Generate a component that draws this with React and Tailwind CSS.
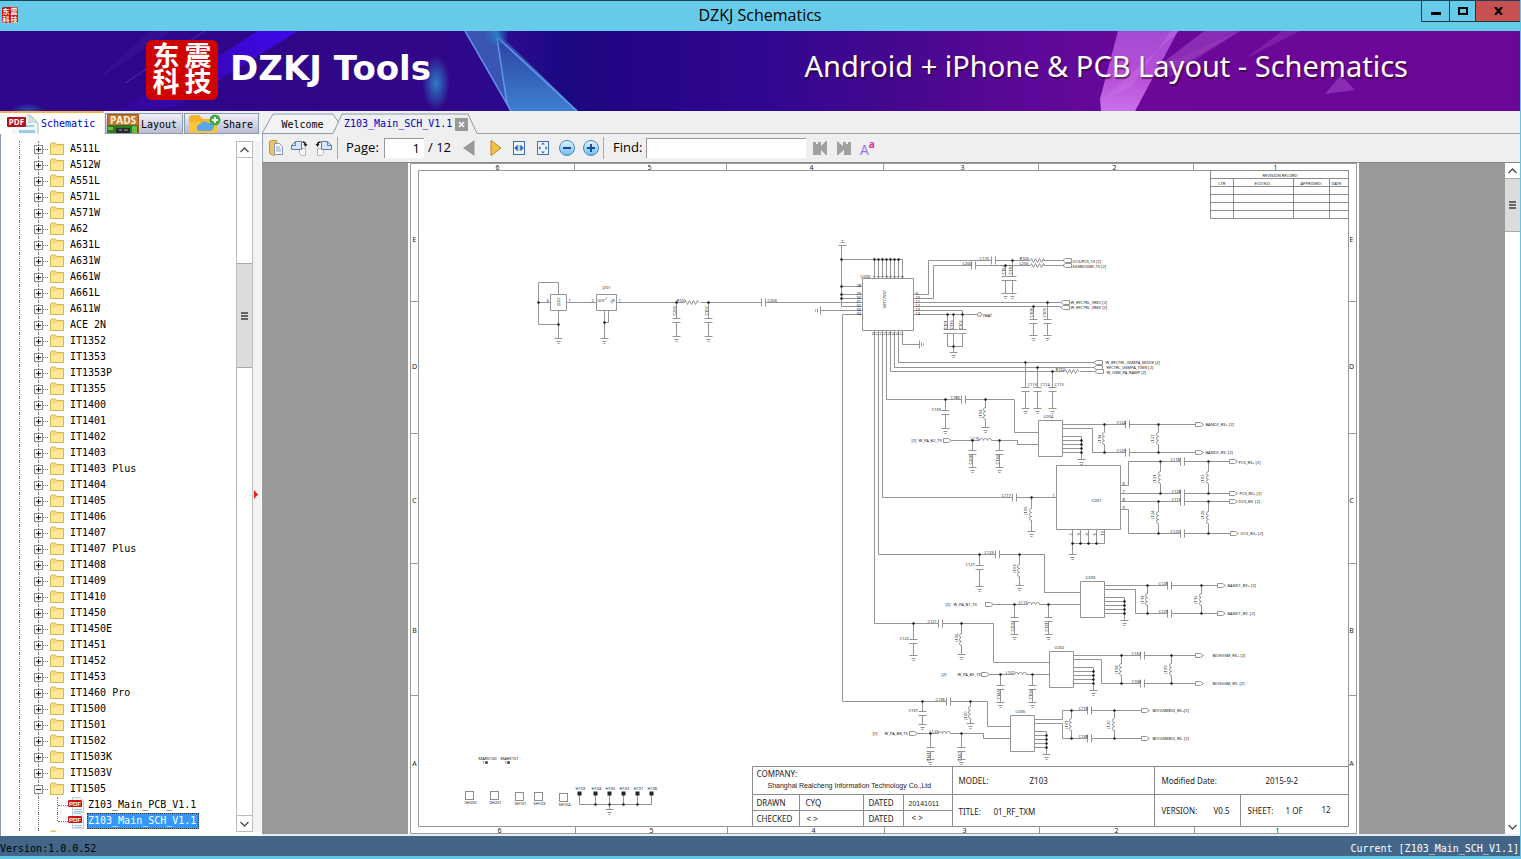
import React from "react";

const MONO = "font-['DejaVu_Sans_Mono',monospace] text-[10px] leading-4";

const FOLDERS = [
  "A511L", "A512W", "A551L", "A571L", "A571W", "A62", "A631L", "A631W", "A661W", "A661L", "A611W",
  "ACE 2N", "IT1352", "IT1353", "IT1353P", "IT1355", "IT1400", "IT1401", "IT1402", "IT1403",
  "IT1403 Plus", "IT1404", "IT1405", "IT1406", "IT1407", "IT1407 Plus", "IT1408", "IT1409",
  "IT1410", "IT1450", "IT1450E", "IT1451", "IT1452", "IT1453", "IT1460 Pro", "IT1500", "IT1501",
  "IT1502", "IT1503K", "IT1503V",
];

const FILES = ["Z103_Main_PCB_V1.1", "Z103_Main_SCH_V1.1"];

/* ---------- icons ---------- */

const FolderIcon = () => (
  <svg width="14" height="14" viewBox="0 0 14 14" className="shrink-0">
    <path d="M.5 12.500V2.500l1-1.500h4l1 1.500h7v10z" fill="#f6dd7c" stroke="#d9b44e" />
    <path d="M1 5.500c4 0 6-1 12-1V12H1z" fill="#fbe99b" />
  </svg>
);

const PdfIcon = () => (
  <svg width="16" height="16" viewBox="0 0 16 16" className="shrink-0">
    <path d="M4.500.500h8l3 3V16h-11z" fill="#f4f8fb" stroke="#b9cdd9" />
    <path d="M6 12.500h8M6 14.500h8" stroke="#9dc7e4" />
    <rect x="0" y="3" width="14" height="7" rx="1" fill="#c4161c" />
    <text x="7" y="9" textAnchor="middle" fontSize="6" fontWeight="700" fill="#fff" fontFamily="Liberation Sans, sans-serif">PDF</text>
  </svg>
);

const PdfTabIcon = () => (
  <svg width="32" height="20" viewBox="0 0 32 20" className="shrink-0">
    <path d="M5 0h17l9 9v11H5z" fill="#f2f7fa" />
    <path d="M22 0l9 9v11" fill="none" stroke="#a9bcc6" />
    <path d="M20 0q4 4 1 9q5-2 10 0z" fill="#d5e2ea" stroke="#a9bcc6" strokeWidth=".5" />
    <path d="M18 11h9v2h-9zM12 16h16v3H12z" fill="#9dcdec" />
    <rect x="0" y="3" width="19" height="10" rx="1" fill="#b8121b" />
    <text x="9.500" y="11" textAnchor="middle" fontSize="8" fontWeight="700" fill="#fff" fontFamily="Open Sans, sans-serif">PDF</text>
  </svg>
);

const PadsIcon = () => (
  <svg width="32" height="19" viewBox="0 0 32 19" className="shrink-0">
    <rect x=".5" y=".5" width="31" height="19" fill="#c9742b" stroke="#9a5a1b" />
    <path d="M1 11h30v8H1z" fill="#2c7a24" />
    <path d="M1 13h5v3H1zM25 12h5v7h-5z" fill="#6dbb3e" />
    <path d="M9 14h14v5H9z" fill="#2a2c2a" />
    <path d="M12 16h3m2 0h4" stroke="#8a9" />
    <text x="16" y="10" textAnchor="middle" fontSize="10" fontWeight="700" fill="#fff6df" fontFamily="Open Sans, sans-serif">PADS</text>
  </svg>
);

const ShareIcon = () => (
  <svg width="32" height="19" viewBox="0 0 32 19" className="shrink-0">
    <path d="M0 19V4q0-3 3-3h7l4 4h11q3 0 3 3v11z" fill="#f5b52a" />
    <path d="M0 8h28v11H0z" fill="#fdc53c" />
    <path d="M9 17a4 4 0 0 1 2-7 5 5 0 0 1 8-1 4 4 0 0 1 3 8z" fill="#5ba7e6" />
    <circle cx="26" cy="6" r="5.500" fill="#45a845" />
    <path d="M26 3v6M23 6h6" stroke="#fff" strokeWidth="2" />
  </svg>
);

const OpenIcon = () => (
  <svg width="16" height="16" viewBox="0 0 16 16">
    <path d="M1.500 1.500l2-1h5v13l-3 2-4-2z" fill="#edc566" stroke="#c6973a" />
    <path d="M6.500 3.500h5l3 3v8h-8z" fill="#f5f9fd" stroke="#7c98ba" />
    <path d="M8 7h4M8 9h5M8 11h5" stroke="#8aa8cc" />
  </svg>
);

const RotateIcon = ({ flip }) => (
  <svg width="17" height="17" viewBox="0 0 17 17">
    <g transform={flip ? "translate(17 0) scale(-1 1)" : undefined}>
      <path d="M8.500 8.500h6v7h-4l-2-2z" fill="#fbfbfb" stroke="#b5b5b5" />
      <path d="M4.500 1.500h6v8h-10v-4z" fill="#d6e8fa" stroke="#5b7fa8" />
      <path d="M.5 5.500h4v-4" fill="none" stroke="#5b7fa8" />
      <path d="M11.500 2q3 0 3 3" fill="none" stroke="#222" strokeWidth="1.500" />
      <path d="M12.500 4h4l-2 3z" fill="#222" />
    </g>
  </svg>
);

const FitIcon = ({ page }) => (
  <svg width="14" height="16" viewBox="0 0 14 16">
    <rect x="1.500" y="1.500" width="11" height="13" fill="#eef5fd" stroke="#3f6fae" />
    {page ? (
      <path d="M7 2.500l2 2H5zM7 13.500l2-2H5zM2.500 8l2-2v4zM11.500 8l-2-2v4z" fill="#2d66b0" />
    ) : (
      <path d="M2.500 8l3-3v6zM11.500 8l-3-3v6zM7 5v6" fill="#2d66b0" stroke="#2d66b0" strokeWidth=".5" />
    )}
  </svg>
);

const ZoomIcon = ({ plus }) => (
  <svg width="18" height="18" viewBox="0 0 18 18">
    <defs>
      <linearGradient id={plus ? "zin" : "zout"} x1="0" y1="0" x2="0" y2="1">
        <stop offset="0" stopColor="#e6f5ff" />
        <stop offset="1" stopColor="#6dbcf3" />
      </linearGradient>
    </defs>
    <circle cx="9" cy="9" r="7.500" fill={plus ? "url(#zin)" : "url(#zout)"} stroke="#4a86bd" />
    <path d={plus ? "M5 9h8M9 5v8" : "M5 9h8"} stroke="#174f8f" strokeWidth="2" />
  </svg>
);

const FindIcon = ({ flip }) => (
  <svg width="16" height="16" viewBox="0 0 16 16">
    {flip ? (
      <path d="M1 1l6 5V2h3v2h2V2h3v13H8v-5l-6 5H1z" fill="#a0a0a0" />
    ) : (
      <path d="M1 2h3v2h2V2h3v4l5-5h1v14h-1L9 10v5H1z" fill="#a0a0a0" />
    )}
  </svg>
);

const Chevron = ({ down }) => (
  <svg width="9" height="6" viewBox="0 0 9 6">
    <path d={down ? "M.5 1l4 4 4-4" : "M.5 5l4-4 4 4"} fill="none" stroke="#555" strokeWidth="1.500" />
  </svg>
);

/* ---------- schematic symbols, each returns path data ---------- */

const capH = (x, y) => `M${x} ${y - 4}v8M${x + 4} ${y - 4}v8`;
const gnd = (x, y) => `M${x - 4} ${y}h8M${x - 2} ${y + 3}h4M${x - 1} ${y + 5}h2`;
const capV = (x, top, plate, bottom) =>
  `M${x} ${top}V${plate}M${x - 4} ${plate}h8M${x - 4} ${plate + 4}h8M${x} ${plate + 4}V${bottom}${gnd(x, bottom)}`;
const coils = (x, y, n) => `M${x} ${y}${"a2 2 0 0 0 0 4".repeat(n)}`;
const indV = (x, top, bottom) => {
  const y = Math.round((top + bottom) / 2) - 6;
  return `M${x} ${top}V${y}${coils(x, y, 3)}V${bottom}`;
};
const indH = (x, y) => `M${x} ${y}${"a2 2 0 0 1 4 0".repeat(3)}`;
const res = (x, y) => `M${x} ${y}l1 -2l2 4l2 -4l2 4l2 -4l2 4l2 -4l1 2`;
const portR = (x, y) => `M${x} ${y - 2}h5l3 2l-3 2h-5z`;
const portL = (x, y) => `M${x} ${y}l3 -2h6v4h-6z`;
const box = (x, y, w, h) => `M${x} ${y}h${w}v${h}h${-w}z`;

const Net = ({ d, dots = [] }) => (
  <>
    <path d={d} fill="none" stroke="#949494" />
    {dots.map(([x, y], i) => (
      <circle key={i} cx={x} cy={y} r="1.200" fill="#111" />
    ))}
  </>
);

const Label = ({ x, y, up, children, size = 4 }) => (
  <text
    x={x}
    y={y}
    fontSize={size}
    fill="#222"
    transform={up ? `rotate(-90 ${x} ${y})` : undefined}
  >
    {children}
  </text>
);

// one filter: IC with two outputs on the right and five grounded pins
const FilterStage = ({ x, y, name, bend, rail, a, b, port, hi, lo, caps, coilsNames, outs, textX }) => {
  const cx = port.cap;
  return (
    <>
      <Net
        d={
          box(x, y, 24, 36) +
          `M${x + 24} ${y + 4}H${bend.x1 || a}` + (bend.x1 ? `V${hi}H${cx}` : `H${cx}`) +
          capH(cx, hi) + `M${cx + 4} ${hi}H${port.x}` +
          `M${x + 24} ${y + 8}H${bend.x}V${lo}H${cx}` +
          capH(cx, lo) + `M${cx + 4} ${lo}H${port.x}` +
          portR(port.x, hi) + portR(port.x, lo) +
          indV(a, hi, lo) + indV(b, hi, lo) +
          [16, 20, 24, 28, 32].map((p) => `M${x + 24} ${y + p}H${rail}`).join("") +
          `M${rail} ${y + 16}V${y + 39}` + gnd(rail, y + 39)
        }
        dots={[[a, hi], [b, hi], [a, lo], [b, lo], ...[20, 24, 28, 32].map((p) => [rail, y + p])]}
      />
      <Label x={x + 5} y={y - 3}>{name}</Label>
      <Label x={cx - 9} y={hi - 1}>{caps[0]}</Label>
      <Label x={cx - 9} y={lo - 1}>{caps[1]}</Label>
      <Label x={a - 4} y={lo - 9} up>{coilsNames[0]}</Label>
      <Label x={b - 5} y={lo - 9} up>{coilsNames[1]}</Label>
      <Label x={textX} y={hi + 1}>{outs[0]}</Label>
      <Label x={textX} y={lo + 1}>{outs[1]}</Label>
    </>
  );
};

// matching network that feeds a filter from the amplifier line
const InputStage = ({ from, y, c1, cap, l1, turn, pin, end, plate, g, names }) => (
  <>
    <Net
      d={
        `M${from} ${y}H${cap}` + capH(cap, y) + `M${cap + 4} ${y}H${turn}V${pin}H${end}` +
        capV(c1, y, plate, g) + indV(l1, y, g - 1) + gnd(l1, g - 1)
      }
      dots={[[c1, y], [l1, y]]}
    />
    <Label x={c1 - 14} y={plate}>{names[0]}</Label>
    <Label x={cap - 11} y={y - 1}>{names[1]}</Label>
    <Label x={l1 - 4} y={y + 19} up>{names[2]}</Label>
  </>
);

const TxStage = ({ port, y, c1, coil, c2, turn, pin, end, plate, g, tag, tagX, textX, name, names }) => (
  <>
    <Net
      d={
        portR(port, y) + `M${port + 8} ${y}H${coil}` + indH(coil, y) +
        `M${coil + 12} ${y}H${turn || end}` + (turn ? `V${pin}H${end}` : "") +
        capV(c1, y, plate, g) + capV(c2, y, plate, g)
      }
      dots={[[c1, y], [c2, y]]}
    />
    <Label x={tagX} y={y + 1}>{tag}</Label>
    <Label x={textX} y={y + 1}>{name}</Label>
    <Label x={coil - 9} y={y - 1}>{names[0]}</Label>
    <Label x={c1 - 1} y={plate + 14} up>{names[1]}</Label>
    <Label x={c2 - 1} y={plate + 14} up>{names[2]}</Label>
  </>
);

const PINS = [874, 878, 882, 886, 890, 894, 898, 902];

const Amplifier = () => (
  <>
    <Net
      d={
        box(862, 278, 51, 52) +
        "M841 245V306H862M838 245h8M840 242h4M841 240h2M841 259H902" +
        PINS.map((x) => `M${x} 259V278`).join("") +
        "M841 286H862M841 294H862M841 298H862M820 310H862M820 306v8M817 308v4M815 309v2" +
        "M862 314H842V701M765 302H862" +
        "M913 294H928V260H991M995 260H1030M1043 260H1063" +
        "M913 298H933V265H971M975 265H1030M1043 265H1063" +
        capH(991, 260) + capH(971, 265) + res(1030, 260) + res(1030, 265) +
        portL(1062, 260) + portL(1062, 265) +
        capV(1005, 265, 276, 293) + capV(1012, 260, 276, 293) +
        "M913 302H1060M913 306H1060" + portL(1060, 302) + portL(1060, 307) +
        capV(1033, 306, 319, 335) + capV(1047, 302, 319, 335) +
        "M913 310H962V314M913 314H977" +
        [947, 953, 962].map((x) => `M${x} 314V329M${x - 4} 329h8M${x - 4} 333h8M${x} 333V346`).join("") +
        "M947 346H962M953 346V352" + gnd(953, 352) +
        "M902 330V344H919M919 340v8M921 342v4M923 343v2" +
        "M898 330V362H1094M894 330V367H1094M890 330V371H1064M1079 371H1094" + res(1064, 371) +
        portL(1093, 362) + portL(1093, 367) + portL(1094, 371) +
        capV(1025, 362, 387, 408) + capV(1037, 367, 387, 408) + capV(1052, 371, 387, 408) +
        "M886 330V399M882 330V497M878 330V554M874 330V623"
      }
      dots={[
        ...PINS.slice(0, 7).map((x) => [x, 259]),
        [841, 259], [841, 286], [841, 294], [841, 298],
        [1005, 265], [1012, 260], [1033, 306], [1047, 302],
        [947, 314], [953, 314], [962, 314], [953, 346],
        [1025, 362], [1037, 367], [1052, 371],
      ]}
    />
    <circle cx="979" cy="314" r="2" fill="#fff" stroke="#8c8c8c" />
    <Label x={860} y={277}>U200</Label>
    <Label x={885} y={308} up>SKY77590</Label>
    {PINS.map((x, i) => (
      <React.Fragment key={x}>
        <Label x={x + 1} y={277} up size={3}>{i + 1}</Label>
        <Label x={x} y={335} up size={3}>{20 + i}</Label>
      </React.Fragment>
    ))}
    {[286, 294, 298, 302, 306, 310, 314].map((y, i) => (
      <Label key={y} x={856} y={y} >{28 + i}</Label>
    ))}
    {[294, 298, 302, 306, 310, 314].map((y, i) => (
      <Label key={y} x={915} y={y} >{9 + i}</Label>
    ))}
    <Label x={979} y={259}>C170</Label>
    <Label x={962} y={264}>C200</Label>
    <Label x={1019} y={259}>R103</Label>
    <Label x={1019} y={264}>L200</Label>
    <Label x={1004} y={274} up>C162</Label>
    <Label x={1011} y={274} up>C130</Label>
    <Label x={1072} y={262}>DCS/PCS_TX   [2]</Label>
    <Label x={1072} y={267}>EGSM/GSM_TX   [2]</Label>
    <Label x={1070} y={303}>W_RFCTRL_VRE2   [2]</Label>
    <Label x={1070} y={308}>W_RFCTRL_VREX   [2]</Label>
    <Label x={1032} y={317} up>C108</Label>
    <Label x={1045} y={317} up>C109</Label>
    <Label x={946} y={329} up>C101</Label>
    <Label x={952} y={329} up>C115</Label>
    <Label x={961} y={329} up>C102</Label>
    <Label x={982} y={316}>VBAT</Label>
    <g>
      <Label x={1105} y={363}>W_RFCTRL_GSMPA_MODE [2]</Label>
      <Label x={1106} y={368}>RFCTRL_GSMPA_TXEN [2]</Label>
      <Label x={1106} y={373}>W_GSM_PA_RAMP [2]</Label>
    </g>
    <Label x={1055} y={370}>R102</Label>
    <Label x={1027} y={385}>C113</Label>
    <Label x={1040} y={385}>C114</Label>
    <Label x={1054} y={385}>C115</Label>
  </>
);

const AntennaPath = () => (
  <>
    <Net
      d={
        "M558 294V282H538V324H558M558 310V338M538 302H550M566 302H596M616 302H684M700 302H761" +
        box(550, 294, 16, 16) + box(596, 294, 20, 16) + gnd(558, 338) +
        "M604 310V338M608 310V322H604M602 301l5 -4M610 300l2 3" + gnd(604, 338) +
        res(684, 302) + capH(761, 302) +
        capV(676, 302, 318, 336) + capV(708, 302, 318, 336)
      }
      dots={[[538, 302], [558, 324], [604, 322], [676, 302], [708, 302]]}
    />
    <Label x={559} y={305} up>J202</Label>
    <Label x={602} y={288}>J201</Label>
    <Label x={597} y={301} size={3}>OUT</Label>
    <Label x={611} y={301} size={3}>IN</Label>
    <Label x={546} y={301}>3</Label>
    <Label x={568} y={301}>1</Label>
    <Label x={591} y={301}>2</Label>
    <Label x={618} y={301}>1</Label>
    <Label x={676} y={301}>R101</Label>
    <Label x={675} y={315} up>C206</Label>
    <Label x={707} y={315} up>C107</Label>
    <Label x={767} y={301}>C203</Label>
  </>
);

const Duplexer = () => (
  <>
    <Net
      d={
        box(1056, 465, 64, 64) + "M882 497H1012M1016 497H1056" + capH(1012, 497) +
        indV(1031, 497, 531) + gnd(1031, 531) +
        "M1120 485H1128V461H1180M1184 461H1229M1120 493H1180M1184 493H1229" +
        "M1120 501H1180M1184 501H1229M1120 509H1128V533H1180M1184 533H1230" +
        capH(1180, 461) + capH(1180, 493) + capH(1180, 501) + capH(1180, 533) +
        portR(1229, 461) + portR(1229, 493) + portR(1229, 501) + portR(1230, 533) +
        indV(1160, 461, 493) + indV(1208, 461, 493) + indV(1158, 501, 533) + indV(1208, 501, 533) +
        [1072, 1080, 1088, 1096, 1104].map((x) => `M${x} 529V543`).join("") +
        "M1072 543H1104M1072 543V554" + gnd(1072, 554)
      }
      dots={[
        [1031, 497], [1160, 461], [1208, 461], [1160, 493], [1208, 493],
        [1158, 501], [1208, 501], [1158, 533], [1208, 533],
        [1072, 543], [1080, 543], [1088, 543], [1096, 543],
      ]}
    />
    <Label x={1091} y={501}>U201</Label>
    <Label x={1001} y={496}>C117</Label>
    <Label x={1026} y={515} up>L105</Label>
    <Label x={1052} y={496}>1</Label>
    <Label x={1122} y={484}>6</Label>
    <Label x={1122} y={492}>7</Label>
    <Label x={1122} y={500}>8</Label>
    <Label x={1122} y={508}>9</Label>
    {[1072, 1080, 1088, 1096, 1104].map((x, i) => (
      <Label key={x} x={x - 1} y={535} up>{[2, 3, 4, 5, 10][i]}</Label>
    ))}
    <Label x={1170} y={460}>C118</Label>
    <Label x={1171} y={492}>C128</Label>
    <Label x={1171} y={500}>C119</Label>
    <Label x={1170} y={532}>C120</Label>
    <Label x={1155} y={483} up>L121</Label>
    <Label x={1203} y={483} up>L102</Label>
    <Label x={1153} y={519} up>L124</Label>
    <Label x={1203} y={519} up>L125</Label>
    <Label x={1238} y={463}>PCS_RX+   [2]</Label>
    <Label x={1239} y={494}>PCS_RX+   [2]</Label>
    <Label x={1238} y={502}>DCS_RX-   [2]</Label>
    <Label x={1240} y={534}>DCS_RX+   [2]</Label>
  </>
);

const TestPoints = () => (
  <>
    {[[465, 791, "SH200"], [490, 791, "SH201"], [515, 792, "SH101"], [534, 792, "SH103"], [559, 793, "SH104"]].map(([x, y, n]) => (
      <React.Fragment key={n}>
        <rect x={x} y={y} width="8" height="8" fill="none" stroke="#8c8c8c" />
        <Label x={x - 1} y={y + 12}>{n}</Label>
      </React.Fragment>
    ))}
    <Net
      d={[579, 595, 609, 623, 637, 651].map((x) => `M${x} 792V804`).join("") + "M579 804H651M609 804V809" + gnd(609, 809)}
      dots={[[595, 804], [609, 804], [623, 804], [637, 804]]}
    />
    {[579, 595, 609, 623, 637, 651].map((x, i) => (
      <React.Fragment key={x}>
        <rect x={x - 2} y={791} width="4" height="4" fill="#222" />
        <Label x={x - 4} y={789}>{["H103", "H104", "H105", "H102", "H101", "H106"][i]}</Label>
      </React.Fragment>
    ))}
    <Label x={478} y={759}>MARK100</Label>
    <Label x={500} y={759}>MARK101</Label>
    <Label x={482} y={763}>1</Label>
    <Label x={504} y={763}>1</Label>
    <circle cx="486" cy="762" r="1.500" fill="#444" />
    <circle cx="508" cy="762" r="1.500" fill="#444" />
  </>
);

const SheetFrame = () => (
  <g fontSize="7" fill="#222">
    <path
      fill="none"
      stroke="#9a9a9a"
      d={
        box(410, 163, 946, 670) + box(418, 170, 930, 656) +
        [574, 726, 883, 1038, 1193].map((x) => `M${x} 163v7M${x + 1} 826v7`).join("") +
        [301, 433, 563, 695].map((y) => `M410 ${y}h8M1348 ${y}h8`).join("")
      }
    />
    {[[497, 6], [649, 5], [811, 4], [962, 3], [1114, 2], [1275, 1]].map(([x, n]) => (
      <React.Fragment key={n}>
        <text x={x} y="169" textAnchor="middle">{n}</text>
        <text x={x + 2} y="832" textAnchor="middle">{n}</text>
      </React.Fragment>
    ))}
    {[[241, "E"], [368, "D"], [502, "C"], [632, "B"], [765, "A"]].map(([y, n]) => (
      <React.Fragment key={n}>
        <text x="414" y={y} textAnchor="middle">{n}</text>
        <text x="1351" y={y} textAnchor="middle">{n}</text>
      </React.Fragment>
    ))}
    <path
      fill="none"
      stroke="#8c8c8c"
      d={
        box(1210, 170, 138, 48) + "M1210 178h138M1210 186h138M1210 194h138M1210 202h138M1210 210h138" +
        "M1233 178v40M1293 178v40M1329 178v40"
      }
    />
    <Label x={1262} y={176}>REVISION RECORD</Label>
    <Label x={1218} y={184}>LTR</Label>
    <Label x={1254} y={184}>ECO NO:</Label>
    <Label x={1300} y={184}>APPROVED:</Label>
    <Label x={1331} y={184}>DATE:</Label>
  </g>
);

const TITLE_TEXT = [
  [756, 776, "COMPANY:"],
  [756, 805, "DRAWN"], [805, 805, "CYQ"], [868, 805, "DATED"],
  [756, 821, "CHECKED"], [806, 821, "< >"], [868, 821, "DATED"], [911, 820, "< >"],
  [958, 783, "MODEL:"], [1029, 783, "Z103"], [958, 814, "TITLE:"], [993, 814, "01_RF_TXM"],
  [1161, 783, "Modified Date:"], [1265, 783, "2015-9-2"],
  [1161, 813, "VERSION:"], [1213, 813, "V0.5"],
  [1247, 813, "SHEET:"], [1285, 813, "1  OF"], [1321, 812, "12"],
];

const TitleBlock = () => (
  <g fill="#222">
    <path
      fill="#fff"
      stroke="#8c8c8c"
      d={
        box(752, 766, 596, 60) + "M752 794H1348M752 810H952M799 794V826M863 794V826M903 794V826" +
        "M952 766V826M1154 766V826M1240 794V826"
      }
    />
    {TITLE_TEXT.map(([x, y, t]) => (
      <text key={`${x}-${y}`} x={x} y={y} fontSize="8">{t}</text>
    ))}
    <g fontSize="7" fontFamily="Liberation Sans, sans-serif">
      <text x="767" y="787">Shanghai Realcheng Information Technology Co.,Ltd</text>
      <text x="908" y="805">20141011</text>
    </g>
  </g>
);

const Schematic = () => (
  <svg
    width="951"
    height="672"
    viewBox="408 163 951 672"
    className="shrink-0 bg-white"
    fontFamily="Noto Sans, sans-serif"
    role="img"
    aria-label="Z103 schematic, sheet 1"
  >
    <g transform="translate(.5 .5)">
      <SheetFrame />
      <AntennaPath />
      <Amplifier />
      <InputStage from={886} y={399} c1={945} cap={961} l1={985} turn={1014} pin={432} end={1038} plate={410} g={428} names={["C133", "C180", "L104"]} />
      <TxStage port={943} y={440} c1={972} coil={979} c2={999} turn={1017} pin={444} end={1038} plate={450} g={467} tag="[2]" tagX={911} textX={918} name="W_PA_B2_TX" names={["L115", "C208", "C134"]} />
      <FilterStage x={1038} y={420} name="U204" bend={{ x: 1092 }} rail={1081} a={1104} b={1158} port={{ cap: 1125, x: 1195 }} hi={424} lo={452} caps={["C124", "C125"]} coilsNames={["L114", "L127"]} outs={["BAND2_RX+   [2]", "BAND2_RX-   [2]"]} textX={1205} />
      <Duplexer />
      <InputStage from={878} y={554} c1={979} cap={995} l1={1019} turn={1044} pin={592} end={1080} plate={565} g={586} names={["C127", "C123", "L103"]} />
      <TxStage port={985} y={604} c1={1014} coil={1027} c2={1048} end={1080} plate={617} g={634} tag="[2]" tagX={945} textX={953} name="W_PA_B1_TX" names={["L113", "C205", "C131"]} />
      <FilterStage x={1080} y={581} name="U203" bend={{ x: 1135 }} rail={1124} a={1147} b={1201} port={{ cap: 1167, x: 1217 }} hi={585} lo={613} caps={["C126", "C129"]} coilsNames={["L111", "L112"]} outs={["BAND1_RX+   [2]", "BAND1_RX-   [2]"]} textX={1227} />
      <InputStage from={874} y={623} c1={913} cap={938} l1={961} turn={993} pin={662} end={1049} plate={639} g={655} names={["C122", "C121", "L106"]} />
      <TxStage port={981} y={674} c1={1000} coil={1014} c2={1032} end={1049} plate={685} g={702} tag="[2]" tagX={941} textX={957} name="W_PA_B5_TX" names={["L107", "C145", "C104"]} />
      <FilterStage x={1049} y={651} name="U202" bend={{ x: 1101 }} rail={1093} a={1121} b={1171} port={{ cap: 1140, x: 1195 }} hi={655} lo={683} caps={["C132", "C106"]} coilsNames={["L108", "L109"]} outs={["BD/EGSM_RX+  [2]", "BD/EGSM_RX-  [2]"]} textX={1212} />
      <InputStage from={842} y={701} c1={922} cap={946} l1={970} turn={987} pin={726} end={1010} plate={711} g={724} names={["C137", "C136", "L100"]} />
      <TxStage port={909} y={733} c1={930} coil={938} c2={961} turn={983} pin={738} end={1010} plate={747} g={759} tag="[2]" tagX={872} textX={884} name="W_PA_B8_TX" names={["L123", "C141", "C140"]} />
      <FilterStage x={1010} y={715} name="U205" bend={{ x: 1062, x1: 1062 }} rail={1046} a={1071} b={1114} port={{ cap: 1087, x: 1141 }} hi={710} lo={738} caps={["C116", "C138"]} coilsNames={["L101", "L120"]} outs={["BD/GSM850_RX+[2]", "BD/GSM850_RX-  [2]"]} textX={1152} />
      <TestPoints />
      <TitleBlock />
    </g>
  </svg>
);

/* ---------- window parts ---------- */

const TitleBar = () => (
  <header className="flex h-[31px] shrink-0 items-start border-t border-[#1c4258] bg-[#66cbe9]">
    <div className="grid w-[99px] pt-[6px] pl-[2px]">
      <div className="grid size-4 grid-cols-2 place-items-center rounded-xs bg-[#c80f12] font-['Noto_Sans_CJK_SC',sans-serif] text-[7px] leading-[7px] font-bold text-white">
        <span>东</span><span>震</span><span>科</span><span>技</span>
      </div>
    </div>
    <h1 className="flex-1 pt-[2px] text-center font-['Open_Sans',sans-serif] text-[16px] leading-6 text-black">DZKJ Schematics</h1>
    <div className="flex h-[21px] w-[99px] border-b border-l border-[#24333b]">
      <button aria-label="Minimize" className="flex w-7 items-center justify-center border-r border-[#24333b]">
        <span className="mt-1 h-[3px] w-[10px] bg-black" />
      </button>
      <button aria-label="Maximize" className="flex w-[26px] items-center justify-center border-r border-[#24333b]">
        <span className="h-2 w-[10px] border-2 border-black" />
      </button>
      <button aria-label="Close" className="flex flex-1 items-center justify-center bg-[#c75050]">
        <svg width="9" height="8" viewBox="0 0 9 8"><path d="M1 0l7 8M8 0L1 8" stroke="#000" strokeWidth="2.200" /></svg>
      </button>
    </div>
  </header>
);

const BannerArt = () => (
  <svg className="absolute inset-0 size-full" viewBox="0 0 1520 80" preserveAspectRatio="none">
    <defs>
      <linearGradient id="bg">
        <stop offset="0" stopColor="#2e078a" />
        <stop offset=".28" stopColor="#310689" />
        <stop offset=".34" stopColor="#2b0a8c" />
        <stop offset=".37" stopColor="#1b0883" />
        <stop offset=".41" stopColor="#240484" />
        <stop offset=".5" stopColor="#30078f" />
        <stop offset=".6" stopColor="#480790" />
        <stop offset=".68" stopColor="#5d089a" />
        <stop offset=".76" stopColor="#6c0799" />
        <stop offset="1" stopColor="#6a0698" />
      </linearGradient>
      <linearGradient id="beam" x1="1" y1="0" x2="0" y2="1">
        <stop offset="0" stopColor="#3d08ee" />
        <stop offset="1" stopColor="#3d08c8" stopOpacity=".25" />
      </linearGradient>
      <linearGradient id="shard" x1="0" y1="0" x2="0" y2="1">
        <stop offset="0" stopColor="#2a3ba0" />
        <stop offset="1" stopColor="#3f80cf" />
      </linearGradient>
      <linearGradient id="pink" x1="0" y1="0" x2="0" y2="1">
        <stop offset="0" stopColor="#a44bd3" />
        <stop offset=".6" stopColor="#b84fd8" />
        <stop offset="1" stopColor="#c873ea" />
      </linearGradient>
      <radialGradient id="glow">
        <stop offset="0" stopColor="#2c7cc4" />
        <stop offset="1" stopColor="#2c7cc4" stopOpacity="0" />
      </radialGradient>
    </defs>
    <path d="M0 0h1520v80H0z" fill="url(#bg)" />
    <path d="M258 0h40L175 76l-60 4 102-54z" fill="url(#beam)" />
    <path d="M205 0L125 52" stroke="#5a4cc0" strokeOpacity=".6" />
    <path d="M150 0h22L95 50z" fill="#3d20a0" opacity=".35" />
    <ellipse cx="436" cy="52" rx="14" ry="28" fill="url(#glow)" />
    <ellipse cx="28" cy="80" rx="18" ry="8" fill="url(#glow)" opacity=".6" />
    <path d="M465 0h31l12 76z" fill="#3a55b4" />
    <path d="M496 0l82 80h-68l-4-8z" fill="url(#shard)" />
    <path d="M465 0l42 73 4 7M496 0l11 73M496 5l81 75" fill="none" stroke="#6199ea" strokeWidth="1.500" />
    <circle cx="497" cy="4" r="12" fill="url(#glow)" />
    <path d="M1118 0h60l-43 80h-34l-1-12z" fill="url(#pink)" />
    <path d="M1101 70l78-70h-8l-40 56z" fill="#d27bea" opacity=".35" />
    <path d="M1204 0h36l-62 37h-22z" fill="#8a2db4" />
    <path d="M1156 37L1240 0l-70 46z" fill="#9a3fc0" opacity=".4" />
    <path d="M1282 0h18l-55 28z" fill="#852aae" opacity=".7" />
    <path d="M1341 44l14 15-30 4z" fill="#8b2db4" />
  </svg>
);

const Banner = () => (
  <section className="relative h-20 shrink-0 overflow-hidden">
    <BannerArt />
    <div className="relative flex h-full items-center pr-[112px] pb-[2px] pl-[146px] text-white">
      <div className="grid h-[60px] w-[72px] grid-cols-2 content-center justify-items-center rounded-md bg-[#cf0303] px-1 pb-1 font-['Noto_Sans_CJK_SC',sans-serif] text-[27px] leading-[26px] font-bold">
        <span>东</span><span>震</span><span>科</span><span>技</span>
      </div>
      <p className="ml-3 pb-1 font-['DejaVu_Sans',sans-serif] text-[34px] leading-10 font-bold">DZKJ Tools</p>
      <p className="ml-auto pb-2 font-['Noto_Sans',sans-serif] text-[29px] leading-10 [text-shadow:1px_2px_1px_#2008]">Android + iPhone &amp; PCB Layout - Schematics</p>
    </div>
  </section>
);

const SideTabs = () => (
  <div role="tablist" className={`flex h-[23px] items-end gap-[1px] bg-[#eeeef2] ${MONO}`}>
    <button role="tab" aria-selected="true" className="flex h-[23px] w-[104px] items-center gap-[2px] overflow-hidden border-t-2 border-[#f5b04c] bg-white pl-[7px] text-[#0000c8]">
      <PdfTabIcon />Schematic
    </button>
    <button role="tab" aria-selected="false" className="flex h-[21px] w-[78px] items-end gap-[2px] overflow-hidden border border-[#8a9bb0] bg-linear-to-b from-[#f0f0f8] to-[#b9bbd3] pl-[1px] text-black">
      <PadsIcon />Layout
    </button>
    <button role="tab" aria-selected="false" className="flex h-[21px] w-[75px] items-end gap-[2px] overflow-hidden border border-[#8a9bb0] bg-linear-to-b from-[#f0f0f8] to-[#b9bbd3] pl-[4px] text-black">
      <ShareIcon />Share
    </button>
  </div>
);

const Toggle = ({ open }) => (
  <div className="flex h-4 w-[9px] flex-col items-center">
    <span className="h-[4px] border-l border-dotted border-[#777]" />
    <button aria-label={open ? "Collapse" : "Expand"} className="size-[9px] shrink-0">
      <svg width="9" height="9" viewBox="0 0 9 9">
        <rect x=".5" y=".5" width="8" height="8" fill="#f3f3f3" stroke="#8f8f8f" />
        <path d={open ? "M2 4.500h5" : "M2 4.500h5M4.500 2v5"} stroke="#222" />
      </svg>
    </button>
    <span className="h-[3px] border-l border-dotted border-[#777]" />
  </div>
);

const FolderRow = ({ name, open }) => (
  <div className="flex h-4 items-center">
    <span className="mr-[14px] h-4 w-[19px] shrink-0 border-r border-dotted border-[#777]" />
    <Toggle open={open} />
    <span className="mr-[2px] w-[5px] border-t border-dotted border-[#777]" />
    <FolderIcon />
    <span className="ml-[6px] whitespace-nowrap">{name}</span>
  </div>
);

const FileRow = ({ name, last, selected }) => (
  <div className="flex h-4 items-center">
    <span className="h-4 w-[19px] shrink-0 border-r border-dotted border-[#777]" />
    <span className="h-4 w-[19px] shrink-0 border-r border-dotted border-[#777]" />
    <span className={`ml-[18px] w-[1px] shrink-0 self-start border-l border-dotted border-[#777] ${last ? "h-2" : "h-4"}`} />
    <span className="w-[10px] shrink-0 border-t border-dotted border-[#777]" />
    <PdfIcon />
    <span className={`ml-[3px] h-4 px-[1px] ${selected ? "bg-[#3397fd] pr-[3px] text-white outline-1 -outline-offset-1 outline-[#333] outline-dotted" : ""}`}>
      {name}
    </span>
  </div>
);

const Grip = () => (
  <span className="flex flex-col gap-[1px]">
    <span className="h-[2px] w-[7px] bg-[#666]" />
    <span className="h-[2px] w-[7px] bg-[#666]" />
    <span className="h-[2px] w-[7px] bg-[#666]" />
  </span>
);

const Sidebar = () => (
  <aside className="flex w-[261px] shrink-0 flex-col bg-[#f0f0f0]">
    <SideTabs />
    <div className="flex min-h-0 flex-1 border-l border-[#8f9bab] bg-white pt-[7px] pb-1">
      <ul className={`min-w-0 flex-1 overflow-hidden text-black ${MONO}`}>
        {FOLDERS.map((f) => (
          <li key={f}><FolderRow name={f} /></li>
        ))}
        <li>
          <FolderRow name="IT1505" open />
          <ul>
            {FILES.map((f, i) => (
              <li key={f}><FileRow name={f} last={i === 1} selected={i === 1} /></li>
            ))}
          </ul>
        </li>
        <li><FolderRow /></li>
      </ul>
      <div className="flex w-[17px] flex-col border border-[#bcbcbc] bg-white">
        <button aria-label="Scroll up" className="flex h-4 items-center justify-center border-b border-[#bcbcbc]"><Chevron /></button>
        <div className="h-[105px]" />
        <div className="flex h-[105px] items-center justify-center border-y border-[#ababab] bg-[#dcdcdc]"><Grip /></div>
        <div className="flex-1" />
        <button aria-label="Scroll down" className="flex h-4 items-center justify-center border-t border-[#bcbcbc]"><Chevron down /></button>
      </div>
      <div className="flex w-2 flex-col bg-[#f3f3f5]">
        <div className="h-[349px] shrink-0" />
        <svg width="6" height="9" viewBox="0 0 6 9"><path d="M1 0l4 4.500L1 9z" fill="#d22" /></svg>
      </div>
    </div>
  </aside>
);

const DocTabs = () => (
  <div role="tablist" className={`flex h-[23px] bg-[#efefef] ${MONO}`}>
    <button role="tab" aria-selected="false" className="relative h-[23px] w-[71px] pt-[5px] pl-[10px] text-black">
      <svg className="absolute top-0 left-0" width="78" height="23" viewBox="0 0 78 23">
        <path d="M0 22.500L11 3h60l6 9-6 10.500z" fill="#f3f3f3" stroke="#8b9cac" />
      </svg>
      <span className="relative">Welcome</span>
    </button>
    <div className="relative flex h-[23px] w-[144px] items-center gap-[3px] pt-[3px] pl-[11px]">
      <svg className="absolute top-0 left-0" width="144" height="23" viewBox="0 0 144 23">
        <path d="M0 22.500L9 3h126l9 19.500" fill="#efefef" stroke="#8b9cac" />
      </svg>
      <button role="tab" aria-selected="true" className="relative text-[#0000c8]">Z103_Main_SCH_V1.1</button>
      <button aria-label="Close tab" className="relative flex size-[13px] items-center justify-center bg-[#999]">
        <svg width="7" height="7" viewBox="0 0 7 7"><path d="M1 1l5 5M6 1L1 6" stroke="#fff" strokeWidth="1.500" /></svg>
      </button>
    </div>
    <div className="flex-1 border-b border-[#98a3ac]" />
  </div>
);

const Toolbar = () => (
  <div className="flex h-[28px] shrink-0 items-center border-l border-[#98a3ac] bg-[#efefef] font-['Open_Sans',sans-serif] text-[13px] text-black">
    <div className="flex h-[22px] w-[75px] items-center gap-[7px] border-r border-[#a9a9a9] pl-[5px]">
      <button aria-label="Open"><OpenIcon /></button>
      <button aria-label="Rotate right"><RotateIcon /></button>
      <button aria-label="Rotate left"><RotateIcon flip /></button>
    </div>
    <label htmlFor="page" className="ml-2 w-[38px]">Page:</label>
    <input id="page" defaultValue="1" className="h-5 w-10 border-t border-l border-[#999] bg-white pr-1 pb-[2px] text-right" />
    <span className="ml-1 w-[28px] whitespace-nowrap">/ 12</span>
    <div className="flex items-center">
      <button aria-label="Previous page" className="flex w-[26px] justify-center">
        <svg width="12" height="16" viewBox="0 0 12 16"><path d="M11.500 0v16L0 8z" fill="#999" /></svg>
      </button>
      <button aria-label="Next page" className="flex w-[28px] justify-center">
        <svg width="12" height="16" viewBox="0 0 12 16"><path d="M1 .5v15L11 8z" fill="#f0c23e" stroke="#b5852a" /></svg>
      </button>
      <button aria-label="Fit width" className="flex w-[18px] justify-center"><FitIcon /></button>
      <button aria-label="Fit page" className="ml-[6px] flex w-[18px] justify-center"><FitIcon page /></button>
      <button aria-label="Zoom out" className="ml-[6px]"><ZoomIcon /></button>
      <button aria-label="Zoom in" className="ml-[6px]"><ZoomIcon plus /></button>
    </div>
    <div className="mx-[3px] h-[22px] w-[1px] bg-[#a9a9a9]" />
    <label htmlFor="find" className="ml-[6px] w-[33px]">Find:</label>
    <input id="find" className="h-5 w-[160px] border-t border-l border-[#999] bg-white px-1" />
    <button aria-label="Find previous" className="ml-[6px]"><FindIcon /></button>
    <button aria-label="Find next" className="ml-[8px]"><FindIcon flip /></button>
    <button aria-label="Match case" className="ml-2 flex h-5 font-['Open_Sans',sans-serif]">
      <span className="self-end text-[14px] leading-4 text-[#9a6ef2]">A</span>
      <span className="text-[10px] leading-3 font-bold text-[#cf2f9f]">a</span>
    </button>
  </div>
);

const Viewer = () => (
  <main className="flex min-w-0 flex-1 flex-col border-l border-white">
    <DocTabs />
    <Toolbar />
    <div className="flex min-h-0 flex-1 border-t border-[#8a8a8a] border-b-2 border-b-[#e8edf2] bg-[#999]">
      <div className="flex min-w-0 flex-1 items-start justify-center overflow-hidden">
        <Schematic />
      </div>
      <div className="flex w-[15px] shrink-0 flex-col bg-white">
        <button aria-label="Page up" className="flex h-[15px] items-center justify-center"><Chevron /></button>
        <div className="flex h-[54px] items-center justify-center border-y border-[#ababab] bg-[#dcdcdc]"><Grip /></div>
        <div className="flex-1" />
        <button aria-label="Page down" className="flex h-[14px] items-center justify-center"><Chevron down /></button>
      </div>
    </div>
  </main>
);

export default function App() {
  return (
    <div className="flex h-screen flex-col overflow-hidden border-r border-b-3 border-[#66c4e3] bg-[#f0f0f0]">
      <TitleBar />
      <Banner />
      <div className="flex min-h-0 flex-1">
        <Sidebar />
        <Viewer />
      </div>
      <footer className="flex h-5 shrink-0 items-end justify-between bg-[#426588] font-['DejaVu_Sans_Mono',monospace] text-[10px] leading-[14px]">
        <span className="text-black">Version:1.0.0.52</span>
        <span className="pr-[1px] text-white">Current [Z103_Main_SCH_V1.1]</span>
      </footer>
    </div>
  );
}
